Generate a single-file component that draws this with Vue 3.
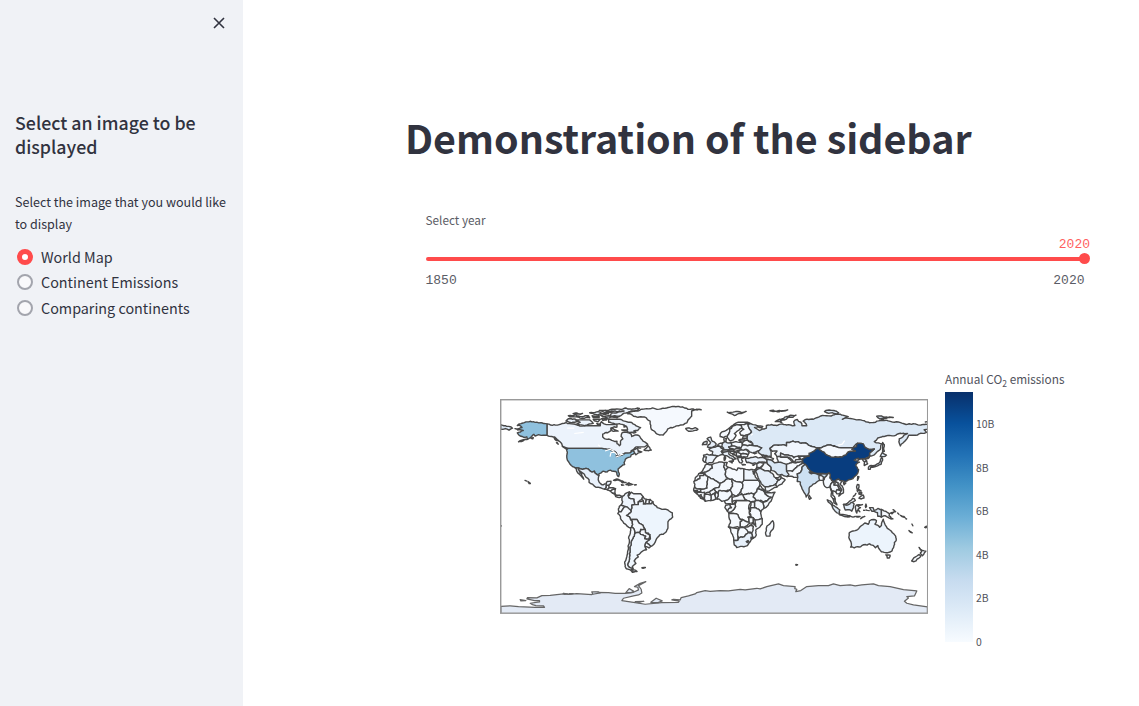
<script setup>
import { ref } from 'vue'

const options = ['World Map', 'Continent Emissions', 'Comparing continents']
const selected = ref('World Map')
const ticks = ['10B', '8B', '6B', '4B', '2B', '0']

const L = '#f5f9fe'
// Outlines as longitude,latitude pairs
const outlines = [
  // North America
  { f: '#ecf3fc', p: '-141,69.6 -135,69 -128,70 -122,69.8 -115,68.5 -108,68 -100,68 -96,68 -95,71.5 -91,69 -86,69 -82,69 -82,67 -87,66 -87,64 -94,61 -94,58.5 -92,57 -85,55.3 -82,55 -82,53 -80,51.2 -79,52 -79,55 -77,57 -78.5,59 -77.5,62.4 -73,62.2 -70,61 -69.5,59 -65,60.2 -62,57.5 -60,55 -56,52.5 -60,50.2 -66,50.2 -70,47 -65,49 -64,46.5 -61,46 -66,43.6 -67,45 -69,47.3 -71,45.2 -75,45 -79,43.4 -82,42 -83,45.5 -88,48.2 -95,49 -123,49 -128,51 -130,54.5 -133,57 -137,59 -141,60' },
  { f: '#8fc1de', p: '-141,69.6 -148,70.5 -156.5,71.3 -163,69.8 -166,68.3 -162,66.5 -168,65.6 -163,64.5 -161,64 -166,62 -165,60.5 -162,59 -158,58.7 -157.5,57 -165,54.5 -155,58 -152,60.8 -151,59.3 -148,60.5 -144,60 -141,60' },
  { f: '#8fc1de', p: '-124.5,48.5 -123,49 -95,49 -88,48.2 -84,46.5 -82.5,45 -82.5,42 -79,43 -76,44.3 -75,45 -71,45.2 -69,47.3 -67,45 -70,43.5 -70.5,41.8 -74,40.5 -76,37 -75.5,35.3 -78,34 -81,31.5 -80,27 -80.5,25.2 -82,27 -83,29.5 -85,29.7 -89.5,30 -90,29.2 -94,29.6 -97.2,27.5 -97.2,26 -99.5,27.5 -101,29.7 -103,29 -104.5,29.7 -106.5,31.7 -111,31.3 -114.8,32.5 -117.1,32.5 -120.5,34.5 -123.8,39 -124.3,43' },
  { f: '#e9f1fb', p: '-117.1,32.5 -116,30 -114,27.5 -112,25.5 -110,23 -110.5,24.5 -112,27.5 -114.7,31.7 -112,29 -109,26 -105.5,22.5 -105.5,20.3 -101.5,17.7 -96,15.8 -92.3,14.5 -91,16 -91,17.8 -89,17.8 -87.5,19 -87,21.3 -90.3,21 -91,18.8 -94.5,18.2 -97,20.5 -97.8,22.5 -97.2,26 -99.5,27.5 -101,29.7 -103,29 -104.5,29.7 -106.5,31.7 -111,31.3 -114.8,32.5' },
  { f: L, p: '-92.3,14.5 -91,16 -91,17.8 -89,17.8 -88.5,15.8 -90,14' },
  { f: L, p: '-90,14 -88.5,15.8 -83.2,15 -87.5,13' },
  { f: L, p: '-87.5,13 -83.2,15 -83.7,11 -85.7,11.2' },
  { f: L, p: '-85.7,11.2 -83.7,11 -82.7,9.5 -79.5,9.5 -77.3,8.5 -78.3,8 -80,7.5 -83,8.3' },
  { f: L, p: '-84.9,22 -82,23.2 -77,21.3 -74.3,20.2 -77.5,20 -79,21.6' },
  { f: L, p: '-74.4,18.5 -72.5,19.8 -68.5,18.6 -71,18' },
  { f: L, p: '-72,17.7 -71.8,19.8' },
  { f: L, p: '-78.2,18.4 -76.3,18 -78,17.8' },
  { f: L, p: '-67,18.4 -65.7,18.3 -67,18' },
  { f: L, p: '-59.2,47.6 -56,51.5 -53,47.5 -55.5,47' },
  { f: L, p: '-64.5,49.8 -62,49.2' }, { f: L, p: '-64,46.8 -62,46.2' },
  { f: L, p: '-132.5,54 -131.5,52.5 -133,53.7' }, { f: L, p: '-135,58 -133,55.5 -131.5,55.5' },
  { f: L, p: '-128,50.7 -123.7,48.5 -126,49.2' },
  { f: '#8fc1de', p: '-154.5,57.5 -152.5,58 -153,57' },
  { f: '#ecf3fc', p: '-72,71 -80,73.5 -89,73.5 -89,71 -80,69.8 -74,67.5 -73,64.5 -78,64.5 -71,62.3 -66,62.5 -68,63.5 -64.5,64 -62,66.5 -67,69' },
  { f: '#ecf3fc', p: '-125,72 -123,74 -117,73.5 -115,71.5 -120,70.5' },
  { f: '#ecf3fc', p: '-117,73 -105,73 -102,70 -107,68.7 -116,69.5 -113,71' },
  { f: '#ecf3fc', p: '-102,73.5 -96,73.5 -98,71.3' },
  { f: '#ecf3fc', p: '-95,74 -90,74 -91,72.8 -94,72.5' },
  { f: '#ecf3fc', p: '-99,70 -96,69.5 -98,68.8' },
  { f: '#ecf3fc', p: '-123,76.5 -117,77.5 -115,75.5 -120,75.5' },
  { f: '#ecf3fc', p: '-119,78.3 -111,78.5 -113,77.6' },
  { f: '#ecf3fc', p: '-116,76 -106,76.5 -105,74.7 -113,74.5' },
  { f: '#ecf3fc', p: '-103,76.5 -97,76.7 -97,75 -102,75' },
  { f: '#ecf3fc', p: '-96,77 -89,76.5 -80,75.8 -82,74.6 -91,75' },
  { f: '#ecf3fc', p: '-105,79 -98,80 -95,78.5 -101,77.5' },
  { f: '#ecf3fc', p: '-96,78.2 -89,78.2 -93,77.6' },
  { f: '#ecf3fc', p: '-97,81 -89,81 -75,83 -63,82.7 -67,80.7 -76,78.7 -80,76.3 -88,76.6 -86,79 -93,79.5' },
  { f: '#ecf3fc', p: '-92,81 -85,80.3 -76,80.5 -86,79' },
  { f: '#ecf3fc', p: '-87,66 -82,64 -81,63.5 -86,63.8' },
  { f: '#ecf3fc', p: '-76,68.3 -74,67.5 -76,67' },
  { f: L, p: '-73,78.2 -67,80.3 -61,82 -50,82.5 -38,83.5 -25,83 -20,82 -11,81.5 -19,80.5 -19,76 -22,73 -23,70.5 -30,68 -39,65.5 -43,60.3 -48,61 -53,65 -54,69.5 -54,72 -59,75.5 -68,76' },
  { f: L, p: '-24,65.7 -22,66.3 -16,66.4 -13.7,65 -18.5,63.5 -22.5,64' },
  { f: L, p: '-159.5,22 -158,21.4' }, { f: L, p: '-157,21 -155.5,20 -155,19.3 -156,19.2' },
  // South America
  { f: '#edf4fc', p: '-77.3,8.5 -75,10.8 -71.5,12.3 -72.5,9.3 -72,7.5 -67.5,6.2 -67,1.5 -69.5,1 -70,-4.2 -73.5,-1.8 -78.5,1.2 -77.2,4 -77.8,7' },
  { f: L, p: '-71.5,12.3 -71.5,9.5 -70,12 -68,10.7 -62,10.7 -60,8.3 -61,6 -64,4 -64,1.5 -67,1.5 -67.5,6.2 -72,7.5 -72.5,9.3' },
  { f: L, p: '-60,8.3 -57.2,6 -58,2 -59.7,2 -60,5 -61,6' },
  { f: L, p: '-57.2,6 -54,5.8 -54.5,2.3 -58,2' },
  { f: L, p: '-54,5.8 -51.7,4 -52.8,2.3 -54.5,2.3' },
  { f: '#edf5fd', p: '-51.7,4 -50,1 -48,-1 -44,-2.5 -39,-3 -35.3,-5.5 -35,-9 -39,-13 -39,-18 -41,-22 -46,-24 -48.5,-27 -52,-33 -53.5,-33.7 -57.5,-30.2 -53.8,-27 -54.5,-25 -54,-24 -58,-22 -58,-19.8 -60,-16 -65,-11 -70.5,-11 -74,-7.5 -70,-4.2 -69.5,1 -67,1.5 -64,1.5 -64,4 -60,5 -59.7,2 -54.5,2.3 -52.8,2.3' },
  { f: L, p: '-78.5,1.2 -75.3,0 -78.5,-4.5 -80.3,-4.3 -80.8,-2' },
  { f: L, p: '-80.3,-4.3 -81.3,-6 -79,-8.5 -76.3,-14 -71,-18 -69.5,-17.5 -69,-12.5 -70.5,-11 -74,-7.5 -70,-4.2 -75.3,0 -78.5,-4.5' },
  { f: L, p: '-69.5,-17.5 -69,-12.5 -70.5,-11 -65,-11 -60,-16 -58,-19.8 -62,-19.5 -63,-22 -67,-22.8' },
  { f: L, p: '-62,-19.5 -58,-19.8 -58,-22 -54.5,-24 -55,-27.3 -58.6,-27.2 -57.8,-25 -63,-22' },
  { f: L, p: '-57.5,-30.2 -53.5,-33.7 -55,-35 -58.4,-34' },
  { f: '#eff6fd', p: '-67,-22.8 -63,-22 -57.8,-25 -58.6,-27.2 -55,-27.3 -54,-25.6 -53.8,-27 -57.5,-30.2 -58.4,-34 -57,-36.5 -62,-39 -65,-41 -64,-42.5 -67.5,-46 -66,-48 -69,-50.5 -68.5,-52.3 -72,-51 -73,-49 -71.5,-43 -71,-37 -70,-32 -68.5,-27' },
  { f: L, p: '-70.5,-18.3 -69.5,-17.5 -67,-22.8 -68.5,-27 -70,-32 -71,-37 -71.5,-43 -73,-49 -72,-51 -68.5,-52.3 -70,-53.5 -65,-54.8 -69,-55.5 -74,-52.5 -75.5,-47 -74,-43.5 -73,-38 -71.5,-30' },
  { f: L, p: '-68.6,-52.7 -68.6,-55' },
  { f: L, p: '-61,-51.7 -58,-51.5 -60,-52.2' },
  // Europe
  { f: L, p: '5,61 5,59 8,58 11,59.3 12.5,61.5 13,65 18,68.5 22,68.8 25.5,69 28,70 31,69.7 28,71 23,71 17,69.5 12,65.5' },
  { f: L, p: '11,59.3 13,55.5 16,56.2 18.5,60 17,61.5 22,65.7 23.5,66 23,68 20.5,69 18,68.5 13,65 12.5,61.5' },
  { f: L, p: '20.5,69 23,68 23.5,66 25,65 21.5,62 22.5,60 28,60.5 31.5,62.7 29,67 28.5,69 28,70 25.5,69' },
  { f: '#dce9f6', p: '28,60.5 31.5,62.7 29,67 28.5,69 31,69.7 41,67.5 40,66.3 34,66.7 38,64 40,65 44,66 44,68.3 54,68.7 60,69 68,68.3 67,71.5 70,73.3 73,71 74,68 78,68 75,72 81,73.5 87,75 100,77 104,77.6 113,75.7 108,73.5 120,73 130,71 140,72.5 152,71 160,69.7 170,69.5 180,69 180,65 177,64.7 179,62.5 170,60 164,60 162,56.5 157,51 156,57 163,61.5 157,61.7 150,59.5 142,59 135,54.7 141,53 140,48 135,43.5 131,42.5 131,45 135,48.4 130.5,48 127,50 121,53.3 117,49.5 113,49.5 107,49.5 99,51.5 92,50.5 87.5,49.2 81,51 77,53.5 71,54.5 61,54 61,51 50,51.5 47,49 48,46.3 48,42 40,43.5 37,46.7 40,49.5 35,51 32,53 28,56 27.5,57.5 28,59.5' },
  { f: '#dce9f6', p: '-180,69 -175,67.5 -170,66 -173,64.3 -176,65.7 -180,65' },
  { f: '#dce9f6', p: '51.5,71.5 55,73.5 61,75.8 69,77 62,75 56,72.5 57,70.7' },
  { f: '#dce9f6', p: '47,80.7 52,80.4 62,81.4 55,81' },
  { f: '#dce9f6', p: '93,80 99,81 105,79 103,78 95,79' },
  { f: '#dce9f6', p: '137,76 145,75.5 151,75 140,73.7' }, { f: '#dce9f6', p: '143,73.5 141,73.3' },
  { f: '#dce9f6', p: '142,54 143.5,52 143,49.5 143.5,46.5 142,46 142,51' },
  { f: L, p: '11,79.5 18,80 27,80.1 21,78.5 17,76.7' },
  { f: L, p: '178,71.2 180,71.5' },
  { f: '#e5eef9', p: '-5.7,50 1,51 1.7,52.7 -1.5,55 -3,58.5 -6,57 -3,54 -5,52' },
  { f: L, p: '-10,52 -6.3,52.2 -6,55 -9,54' },
  { f: '#eaf2fb', p: '-1.7,43.4 3,42.5 7.5,43.8 6,46.3 8,49 2.5,51 -1.5,49.6 -4.5,48.4 -1.2,46' },
  { f: '#eaf2fb', p: '-9,43.2 -1.7,43.4 3,42.5 -0.3,39 -2,36.8 -5.5,36 -7.3,37.2 -9.3,38.7' },
  { f: L, p: '-8.8,42 -6.5,41.7 -7.3,37.2 -9.3,38.7' },
  { f: '#e0ebf8', p: '6,51 7,53.6 9,54.8 14,54 15,51 12.2,50.2 13.5,48.7 12,47.6 8,47.6 8,49' },
  { f: L, p: '2.5,51 5,53.3 7,53.3 6,50' }, { f: L, p: '8,57 10.5,57.5 10,55 8.5,55' },
  { f: L, p: '14,54 19,54.5 23.5,54 24,50.5 22.5,49 15,51' },
  { f: L, p: '12.2,50.2 15,51 18.7,50 22.5,49 17,48 13.5,48.7' },
  { f: L, p: '6,46.3 8,47.6 12,47.6 17,48 16,46.6 13,46.5 8,46' },
  { f: '#eaf2fb', p: '7.5,43.8 7,45.5 13,46.5 12.3,44.3 18.5,40.2 16.5,39.8 16,38 15,40.5 10.5,42.8' },
  { f: L, p: '12.5,38 15.5,38.2 15,36.7' }, { f: L, p: '8.3,41 9.7,41 9,39 8.4,39' }, { f: L, p: '9.3,43 9.2,41.4 8.6,42.2' },
  { f: L, p: '13,46.5 16,46.6 19,45.5 16,45 18.5,42.5 14,45' }, { f: L, p: '16,46.6 22.5,48 20,46 19,45.5' },
  { f: L, p: '19,45.5 20,46 22.6,44.3 22.5,42.3 19.3,42' },
  { f: L, p: '20,46 22.5,48 27,48.2 29.5,45.2 28.5,43.7 22.6,44.3' },
  { f: L, p: '22.6,44.3 28.5,43.7 28,42 26,41.5 22.5,42.3' },
  { f: L, p: '19.3,42 20.7,41 26,41.5 23,40.3 24,38 23,36.5 21.5,37 20,39.7' },
  { f: L, p: '23.5,35.4 26.3,35.2 24,35' },
  { f: L, p: '23.5,54 24,51.7 31,51.5 32.5,53.2 28,56' },
  { f: L, p: '21,56 24,57 24.5,59.3 28,59.5 27.5,57.5 28,56 23.5,54 21,55.3' }, { f: L, p: '24.5,57.5 27.5,57.5' }, { f: L, p: '21,56 26,56' },
  { f: '#f0f6fd', p: '22.5,49 24,51.7 31,51.5 35,51 40,49.5 38,47 35,46 33,45 30,46 27,48.2 22.5,48' },
  { f: L, p: '33,45.5 36,45.2 34,44.4' },
  // Africa
  { f: L, p: '-6,35.8 -2,35 -1.5,32.3 -5,30 -8.7,28.7 -13,27.7 -9.8,30' },
  { f: L, p: '-13,27.7 -8.7,27.7 -8.7,26 -12,26 -12,23.5 -17,21 -16,24' },
  { f: '#f0f6fd', p: '-2,35 3,36.9 8.5,37 8,33.5 9.5,30.5 10,25 12,23.5 5,19.5 -5,25 -8.7,27.7 -8.7,28.7 -5,30 -1.5,32.3' },
  { f: L, p: '8.5,37 11,37 10,34.5 11.5,33 9.5,30.5 8,33.5' },
  { f: L, p: '11.5,33 15.5,31.5 19,30.3 20,32.5 25,31.7 25,20 23.5,20 15,23 12,23.5 10,25 9.5,30.5' },
  { f: '#edf4fc', p: '25,31.7 32,31.2 34.5,31 34.3,28 32.5,29.8 35.5,24 37,22 25,22' },
  { f: L, p: '-17,21 -12,23.5 -12,26 -8.7,26 -8.7,27.7 -5,25 -6,15.5 -12,14.8 -16.5,16.5' },
  { f: L, p: '-5,25 5,19.5 4,16 0,15 -4,12 -8,10.3 -11.5,12.5 -12,14.8 -6,15.5' },
  { f: L, p: '5,19.5 12,23.5 15,23 15.5,17 13,13.7 4,12 2,12 0,15 4,16' },
  { f: L, p: '15,23 23.5,20 24,15.5 22,12 18.5,8.5 15,10 13,13.7 15.5,17' },
  { f: L, p: '23.5,20 25,22 37,22 38.5,18 36.5,15 34,10.5 24,10 22,12 24,15.5' },
  { f: L, p: '24,10 34,10.5 33,7.8 35.5,5 31,3.7 27.5,5' },
  { f: L, p: '34,10.5 36.5,15 42,12.5 43,10.5 48,8 45,5 42,4 35.5,5 33,7.8' }, { f: L, p: '38.5,18 43,12.5 42,12.5 36.5,15' },
  { f: L, p: '43,10.5 43,11.5 51.3,12 48,4.5 41.7,-1.7 41,3 45,5 48,8' },
  { f: L, p: '35.5,5 41,3 41.7,-1.7 39.3,-4.7 34,-1 34,4' },
  { f: L, p: '34,-1 39.3,-4.7 39.5,-7 40.5,-10.5 34.5,-11.5 31,-8.5 29.5,-5 30.5,-1' },
  { f: L, p: '30.5,-1 34,-1 34,4 31,3.7' }, { f: L, p: '29,-1.5 30.8,-1.5 30.5,-4.2 29.3,-4.2 29,-2.7 30.8,-2.7' },
  { f: '#fbfdff', p: '18.5,5 27.5,5 31,3.7 29,-1.5 29.5,-5 30.5,-8.5 28.5,-9 29.5,-13.3 24,-11 22,-11 20,-7 16.5,-6 12.3,-5.7 16,-3 18,0' },
  { f: L, p: '15,7.5 18.5,8.5 24,10 27.5,5 18.5,5 15,3.7' },
  { f: L, p: '13,2.2 16.5,2 18.5,5 18,0 16,-3 12,-5 11,-3.8 14.5,-1' }, { f: L, p: '9.7,1 13,2.2 14.5,-1 11,-3.8 9,-1' },
  { f: L, p: '8.7,4.7 13,7.5 15,10 13,13.7 15,10 15,3.7 16.5,2 10,2.2' },
  { f: '#f2f8fe', p: '2.7,6.3 5,5.5 6.5,4.3 8.7,4.7 13,7.5 15,10 13.5,13.7 4,13.5 3.5,10' },
  { f: L, p: '-4,12 0,15 2,12 0,11 -2.8,9.7' }, { f: L, p: '2,12 3.5,10 2.7,6.3 1.5,6.2 1,11' }, { f: L, p: '0,11 1,6 -3,5 -2.8,9.7' },
  { f: L, p: '-8,10.3 -2.8,9.7 -3,5 -7.5,4.4 -8.3,7' }, { f: L, p: '-11.5,7 -8.3,7 -7.5,4.4' }, { f: L, p: '-15,11 -13.5,12.5 -8,12 -8.3,7 -13,9' }, { f: L, p: '-13,9 -11,10 -11.5,7' },
  { f: L, p: '-17.3,14.7 -16.5,16.5 -12,14.8 -11.5,12.5 -16.7,12.4' }, { f: L, p: '-16.7,13.5 -14,13.5' }, { f: L, p: '-16.7,12.4 -13.5,12.5 -15,11' },
  { f: L, p: '12.3,-6 16.5,-6 20,-7 22,-11 24,-11 22,-13 22,-17.5 12,-17.2 13.7,-12' },
  { f: L, p: '22,-13 24,-11 29.5,-13.3 28.5,-9 33,-9.5 33,-13.5 28,-16 25,-17.8 22,-17' },
  { f: L, p: '33,-9.5 34.5,-11.5 35.7,-16 34.5,-15.5 33,-13.5' },
  { f: L, p: '34.5,-11.5 40.5,-10.5 40.5,-15 35,-20 35.5,-24 32.7,-27 31.5,-22.5 33,-17 30.3,-16 33,-13.5 35.3,-17' },
  { f: L, p: '25,-17.8 30.3,-16 33,-17 31.5,-22.3 28,-21.5' },
  { f: L, p: '12,-17.2 25,-17.8 21,-18.3 20,-22 20,-28.5 16.5,-28.6 14.5,-22.5' },
  { f: L, p: '21,-18.3 25,-17.8 29,-22 25.5,-25.5 20.7,-26.8 20,-22' },
  { f: '#e7f0fa', p: '16.5,-28.6 20,-28.5 20.7,-26.8 25.5,-25.5 29,-22 31.5,-22.5 32.7,-27 28,-33 25,-34 19,-34.7' },
  { f: L, p: '27,-29.6 28.5,-28.7 29.3,-29.5 28,-30.5' }, { f: L, p: '31,-26 32,-26 31.8,-27.2 31,-27' },
  { f: L, p: '49.3,-12 50.3,-15.5 47,-25 44,-25 43.3,-22 44.5,-16.5' },
  // Middle East and Asia
  { f: '#e8f0fa', p: '26.3,40.5 31,41.3 35,42 41.5,41.5 44.5,39.8 44.5,37.3 36,36 32,36.2 27.5,37' },
  { f: L, p: '32.3,35 34.5,35.6 33,34.6' }, { f: L, p: '40,43.5 46.5,41.8 41.5,41.5' }, { f: L, p: '46.5,41.8 50,40.3 48.8,38.5 44.5,39.8 41.5,41.5' },
  { f: L, p: '36,36 42,37 41,34.5 36,32.5' }, { f: L, p: '34.5,31 36,33 35,29.5' }, { f: L, p: '36,32.5 39,32 36,29.3 35,29.5' },
  { f: L, p: '42,37 44.5,37.3 46,35 48,31 47,29.2 39,32 41,34.5' },
  { f: '#e5eef9', p: '35,29.5 39,32 47,29.2 50,26.7 51.7,24.2 55,22.5 52,19 47,17 43,16.5 39,21' },
  { f: L, p: '43,16.5 47,17 52,19 53,16.5 45,12.8 43.5,13' }, { f: L, p: '52,19 55,22.5 56.3,24.5 59.8,22.5 57,18.8 53,16.5' }, { f: L, p: '51.7,24.2 54,24.2 56.3,26 56.3,24.5 55,22.5' },
  { f: '#d9e7f5', p: '44.5,39.8 48.8,38.5 51,36.7 54,37.3 58,38 61,36.5 61,31 63,27 61.5,25.2 57,27 54,26.6 50,30 48,31 46,35 44.5,37.3' },
  { f: '#f0f6fd', p: '47,49 50,51.5 61,51 61,54 71,54.5 77,53.5 81,51 87.5,49.2 83,46 80,42.3 71,42.3 68,41.5 62,43.5 56,45 56,41.5 53,42 51,44.5 53,46.7 49,46.5' },
  { f: L, p: '56,41.5 56,45 62,43.5 67,41 71,42.3 73,40.5 68,37.3 62,41.5' }, { f: L, p: '53,42 56,41.5 62,41.5 66.5,37.4 61,35.5 54,37.3' },
  { f: L, p: '71,42.3 80,42.3 74,39.5 69,39.5 73,40.5' }, { f: L, p: '68,37.3 69,39.5 74,39.5 75,37.3' },
  { f: L, p: '61,35.5 66.5,37.4 75,37.3 70,34 66,29.5 61,29.8' },
  { f: L, p: '61.5,25.2 63,27 61,29.8 66,29.5 70,34 75,37 77,35.5 74,33 74,31 70,27.5 70.5,24.5 67,24.5' },
  { f: '#cde0f2', p: '70.5,24.5 70,27.5 74,31 74,33 77,35.5 79,32.5 81,30 88,27 92,27.8 97,28.2 93,24 92,22 89,22 87,21 80,15.5 80,12 77.5,8 74,15 72.7,20.5 70,21' },
  { f: L, p: '80,9.5 81.8,7 80.3,6' }, { f: L, p: '80,29 88,27.7 88,26.5 82,27.5' }, { f: L, p: '88.5,26 92,25 92,22 89,22' },
  { f: '#083d7f', p: '74,39.5 80,42.3 80,45 83,46 85.5,48 87.5,49.2 91,46.5 96,43 105,41.7 111,43.5 112,45 119,46.8 116,48 117,49.5 120,50.5 121,53.3 125.5,53 127,50 130.5,48 135,48.4 131,45 131,42.5 125,40 121.5,39 121.5,40.7 118,39 122.5,37.3 119.3,35 121.8,31 121,28 117,23.5 110.5,21 108,21.6 105,23 102,21.5 99,22 97.5,24 97,28.2 92,27.8 88,27.8 81,30 79,32.5 77,35.5' },
  { f: '#f5f9fe', p: '87.5,49.2 92,50.5 99,51.5 103,50.3 107,49.5 117,49.5 116,48 119,46.8 112,45 111,43.5 105,41.7 96,43 91,46.5' },
  { f: L, p: '125,40 131,42.5 127.5,39.5 128.5,38.3 129.4,36 126.5,34.5 126.7,37.5' }, { f: L, p: '126.7,37.7 128.5,38.3' },
  { f: '#dce9f6', p: '130,31.3 131,34.2 137,35.6 140,38 141.3,41.4 142,39 140.8,35.6 136,33.7 132,33 131.5,31.3' },
  { f: '#dce9f6', p: '140,42 141.7,45.4 145.3,43.3 143,42' }, { f: L, p: '121,25.2 122,25 120.8,22' }, { f: L, p: '109,20 111,19.8 109.5,18.3' },
  { f: L, p: '92,22 93,24 97,28.2 97.5,24 99,22 101,21 98,18 98.7,13 97.5,16.5 94.5,16' },
  { f: L, p: '101,21 98,18 99,13 98.5,8.5 100.3,6.5 102,6.2 100,9.5 100,13.3 102.5,12.2 105.5,14.5 104,18 101,18' },
  { f: L, p: '102,21.5 104.5,20 107.5,15 105.5,14.5 104,18 101,18' }, { f: L, p: '102,21.5 105,23 108,21.6 106,19 109,14.5 109,11.5 105,8.7 106,11 107.5,14 104.5,20' }, { f: L, p: '102.5,12.2 103.5,14.3 107.5,14 106,11 103.5,10.6' },
  { f: L, p: '100.3,6.5 102,6.2 103.5,1.3 101,3' },
  { f: '#dfebf7', p: '95.3,5.6 98,4.5 103.5,-1 106,-3 105.7,-5.8 102,-4 98.7,1.7' },
  { f: '#dfebf7', p: '105.3,-6.7 108.5,-6.7 114.4,-7.7 114.3,-8.7 108,-7.7' }, { f: '#dfebf7', p: '109,1.7 113,1.5 115.5,4.5 118,2 117.5,-1 116,-4 110.5,-3' },
  { f: L, p: '109,1.7 113,3.2 116.7,7 119,5 117.5,4 115,3 113,1.5' }, { f: L, p: '119,0 120,1.2 125,1.6 121,0.5 123.3,-1 121.5,-2 122.8,-4.5 121,-3 120.3,-5.5 119.4,-3.4' },
  { f: L, p: '115,-8.3 119,-8.5 117,-9' }, { f: L, p: '119.8,-8.4 123,-8.5 120.5,-9' }, { f: L, p: '123.5,-10.3 127,-8.4 125,-9.2' }, { f: L, p: '128,2 128.5,0 127.7,-0.8' }, { f: L, p: '126,-3.2 127,-3.3' }, { f: L, p: '128,-3 130.7,-3.5' },
  { f: L, p: '120,16.5 120.7,18.5 122,18.3 121.5,15 124,13 120.7,14' }, { f: L, p: '122,7 123.5,8.5 125.5,9.7 126.3,7 124,6.3' }, { f: L, p: '122,11.5 124.5,11.5 124,10 122,10.5' }, { f: L, p: '117.3,8.5 119.5,11' }, { f: L, p: '120.5,13.3 121,12.4' },
  // Oceania
  { f: '#dfebf7', p: '131,-1 134,-1 135,-3.3 138,-1.7 141,-2.6 141,-9 138,-8.3 137.7,-5.3 133,-4 132,-2.8' },
  { f: L, p: '141,-2.6 145,-4.3 147.7,-6 147.5,-8 150.7,-10.5 147,-9.5 144,-7.7 141,-9' },
  { f: L, p: '148.5,-5.7 151.5,-5 152,-4.2 150,-6.2' }, { f: L, p: '150.8,-2.7 153,-4.5' }, { f: L, p: '154.7,-5.5 155.8,-6.7' }, { f: L, p: '157,-7.5 160,-8.5 161,-9.5 159,-8.7' }, { f: L, p: '161.5,-10.3 162.2,-10.6' },
  { f: L, p: '164.2,-20.3 167,-22.3 165,-21.3' }, { f: L, p: '166.7,-14.8 167.5,-16.3' }, { f: L, p: '177.5,-17.7 180,-16.5 178.5,-18' },
  { f: L, p: '-180,-16 -179.6,-16.5' },
  { f: '#ecf4fc', p: '142.5,-10.8 143.7,-14.3 146,-18.5 149,-20.5 153,-25 153.5,-28.5 150.3,-36 150,-37.5 146.5,-39 141,-38.2 139,-35.7 138,-33 136,-34.8 134,-32.8 131,-31.5 126,-32.3 123.5,-34 118,-35 115,-34.3 115.7,-31.5 113.5,-26 114,-22 117,-20.7 121,-19.5 124,-16.3 127,-14 130,-15 130.8,-12.3 132.5,-11.2 136.8,-12 135.5,-15 139.5,-17.5 141,-16 141.5,-13' },
  { f: L, p: '144.7,-40.8 148.3,-41 147.5,-43.5 146,-43.5' }, { f: L, p: '172.7,-34.5 175,-36.8 178.5,-37.7 175.5,-41.6 173.8,-39.3 175,-38' }, { f: L, p: '172.7,-40.5 174.2,-41.8 171,-44.5 168.5,-46.6 166.5,-46' },
  { f: L, p: '68.8,-49 70.3,-49.2 69,-49.6' },
]

// Roughen each edge by its midpoint, so neighbours keep a shared border
const noise = (a, b) => {
  const n = Math.sin(a * 12.9898 + b * 78.233) * 43758.5453
  return n - Math.floor(n) - 0.5
}
function midpoints(a, b) {
  const length = Math.hypot(a[0] - b[0], a[1] - b[1])
  if (length < 2.2 || a[0] === b[0] || a[1] === b[1]) return []
  const x = (a[0] + b[0]) / 2
  const y = (a[1] + b[1]) / 2
  const amount = Math.min(length * 0.3, 1.8)
  const m = [x + noise(x, y) * amount, y + noise(y, x) * amount]
  return [...midpoints(a, m), m, ...midpoints(m, b)]
}
const countries = outlines.map(({ f, p }) => {
  const pts = p.split(' ').map((s) => s.split(',').map(Number))
  const out = pts.flatMap((a, i) => [a, ...midpoints(a, pts[(i + 1) % pts.length])])
  return { f, p: out.map(([x, y]) => `${x.toFixed(2)},${y.toFixed(2)}`).join(' ') }
})
</script>

<template>
  <div class="app">
    <aside class="sidebar">
      <button class="close" aria-label="Close">
        <svg viewBox="0 0 12 12"><path d="M1 1 11 11M11 1 1 11" /></svg>
      </button>
      <h2>Select an image to be<br />displayed</h2>
      <p class="prompt">Select the image that you would like<br />to display</p>
      <div class="radios" role="radiogroup">
        <div v-for="o in options" :key="o" class="radio" role="radio" :aria-checked="selected === o" @click="selected = o">
          <span class="dot" :class="{ on: selected === o }"></span><span>{{ o }}</span>
        </div>
      </div>
    </aside>

    <main class="main">
      <h1>Demonstration of the sidebar</h1>
      <section class="slider">
        <div class="label">Select year</div>
        <div class="value">2020</div>
        <div class="track"><span class="thumb"></span></div>
        <div class="range"><span>1850</span><span>2020</span></div>
      </section>

      <section class="chart">
        <svg class="map" viewBox="-180.6 -90.6 361.2 181.2" preserveAspectRatio="none">
          <defs><clipPath id="world"><rect x="-180" y="-90" width="360" height="180" /></clipPath></defs>
          <g clip-path="url(#world)">
            <g class="land" transform="scale(1 -1)">
              <polygon v-for="(c, i) in countries" :key="i" :points="c.p" :fill="c.f" />
              <g class="water">
                <path d="M-92 46.7-88 48.2-84.6 46.6M-87.8 42-87 45.5-84 45.8-82 43.5M-83 41.7-79 43M-79.5 43.5-76.5 44M-98 52-96 50.5M-118 61.5-110 62.5M-124 66-118 66M104 51.5 108 52.5 110 55.5M31 60 32.5 61" />
              </g>
            </g>
            <g class="land" transform="translate(-184.65 45.1) scale(.281)">
              <path class="ice" d="M17 139 45 138 70 140 120 142 148 142 145 138 122 137 112 134 105 130 133 126 133 122 118 122 95 117 97 113 125 114 140 107 165 106 205 102 220 103 245 101 290 104 300 97 340 98 360 100 390 100 415 97 430 90 428 82 418 80 435 70 452 65 430 77 438 88 440 99 430 105 415 108 385 115 380 122 400 125 420 128 450 133 500 128 550 127 552 124 530 120 535 118 555 120 558 113 580 108 600 102 605 98 630 92 645 94 675 92 700 93 735 88 750 90 785 85 795 87 815 80 850 72 865 77 900 80 899 86 905 88 902 95 917 92 935 80 970 77 1000 77 1015 72 1035 77 1065 75 1080 78 1100 75 1135 72 1150 77 1185 80 1225 89 1265 93 1258 108 1235 110 1240 114 1228 124 1235 130 1255 135 1297 141 1297 162 17 162Z" />
              <path class="ice" d="M75 119l17 3-15 1zM204 100l14 2-10 1zM222 101l12 0-10 2zM290 96l20 0 5 3-22 4zM392 98l10-12 14 8-8 4zM420 125l26-1-15 4zM467 127l16-12 18 8-12 5z" />
            </g>
          </g>
          <rect class="frame" x="-180" y="-90" width="360" height="180" />
        </svg>
        <div class="legend">
          <div class="legend-title">Annual CO<span class="sub">2</span> emissions</div>
          <div class="scale">
            <div class="bar"></div>
            <div class="ticks"><span v-for="t in ticks" :key="t">{{ t }}</span></div>
          </div>
        </div>
      </section>
    </main>
  </div>
</template>

<style>
body { margin: 0; background: #fff; }
</style>

<style scoped>
.app { display: flex; height: 706px; overflow: hidden; color: #31333f; font-family: "Noto Sans CJK SC", "Noto Sans", sans-serif; }
.sidebar { width: 243px; flex: none; box-sizing: border-box; background: #f0f2f6; padding: 17px 15px 0; }
.close { display: block; width: 12px; height: 12px; margin: 0 3px 0 auto; padding: 0; border: 0; background: none; }
.close svg { display: block; width: 12px; height: 12px; fill: none; stroke: #31333f; stroke-width: 1.6; }
h2 { margin: 81px 0 0; font-size: 17.8px; line-height: 24px; font-weight: 500; white-space: nowrap; }
.prompt { margin: 33px 0 0; font-size: 12.55px; line-height: 22px; white-space: nowrap; }
.radios { margin-top: 9px; }
.radio { display: flex; align-items: center; height: 25.6px; padding-left: 2px; gap: 8px; font-size: 14.35px; line-height: 24px; white-space: nowrap; }
.dot { box-sizing: border-box; width: 16px; height: 16px; border-radius: 50%; border: 2px solid #a3a5ad; background: #f9f9fb; }
.dot.on { border: 5px solid #ff4b4b; background: #fff; }
.main { flex: 1; padding: 110px 49px 0 162px; }
h1 { margin: 0; font-size: 39.4px; line-height: 53px; font-weight: 700; white-space: nowrap; }
.slider { margin: 47px 0 0 20.5px; width: 659px; }
.label { font-size: 11.8px; line-height: 20px; color: #5a5c65; }
.value { margin: 7px -5.5px 0 0; text-align: right; font: 13px/16px "Liberation Mono", monospace; color: #ff5f5f; }
.track { position: relative; height: 4px; margin-top: 3.5px; border-radius: 2px; background: #ff4b4b; }
.thumb { position: absolute; right: -5px; top: -3.5px; width: 11px; height: 11px; border-radius: 50%; background: #ff4b4b; }
.range { display: flex; justify-content: space-between; margin-top: 12.5px; font: 13px/16px "Liberation Mono", monospace; color: #5a5c65; }
.chart { display: flex; align-items: flex-start; margin: 81px 0 0 95px; }
.map { width: 428.4px; height: 214.9px; margin-top: 29px; margin-left: -.4px; flex: none; }
.land { stroke: #484848; stroke-linejoin: round; }
.land path { vector-effect: non-scaling-stroke; stroke-width: 1.25; }
.land polygon { vector-effect: non-scaling-stroke; stroke-width: 1.4; }
.land .water path { fill: none; stroke: #fff; stroke-width: 1.2; }
.land .ice { fill: #e3eaf5; stroke: #666; }
.frame { fill: none; stroke: #999; stroke-width: 1.2; }
.legend { margin-left: 17px; color: #51535d; }
.legend-title { height: 22px; font-size: 11.8px; line-height: 18px; white-space: nowrap; }
.sub { font-size: 8.5px; line-height: 1; position: relative; top: 2.5px; }
.scale { display: flex; }
.bar { width: 28px; height: 250px; background: linear-gradient(to top, #f7fbff 0%, #deebf7 12.5%, #c6dbef 25%, #9ecae1 37.5%, #6baed6 50%, #4292c6 62.5%, #2171b5 75%, #08519c 87.5%, #08306b 100%); }
.ticks { display: flex; flex-direction: column; justify-content: space-between; height: 232px; margin: 25px 0 0 3px; font-size: 10.4px; }
.ticks span { line-height: 14px; }
</style>
